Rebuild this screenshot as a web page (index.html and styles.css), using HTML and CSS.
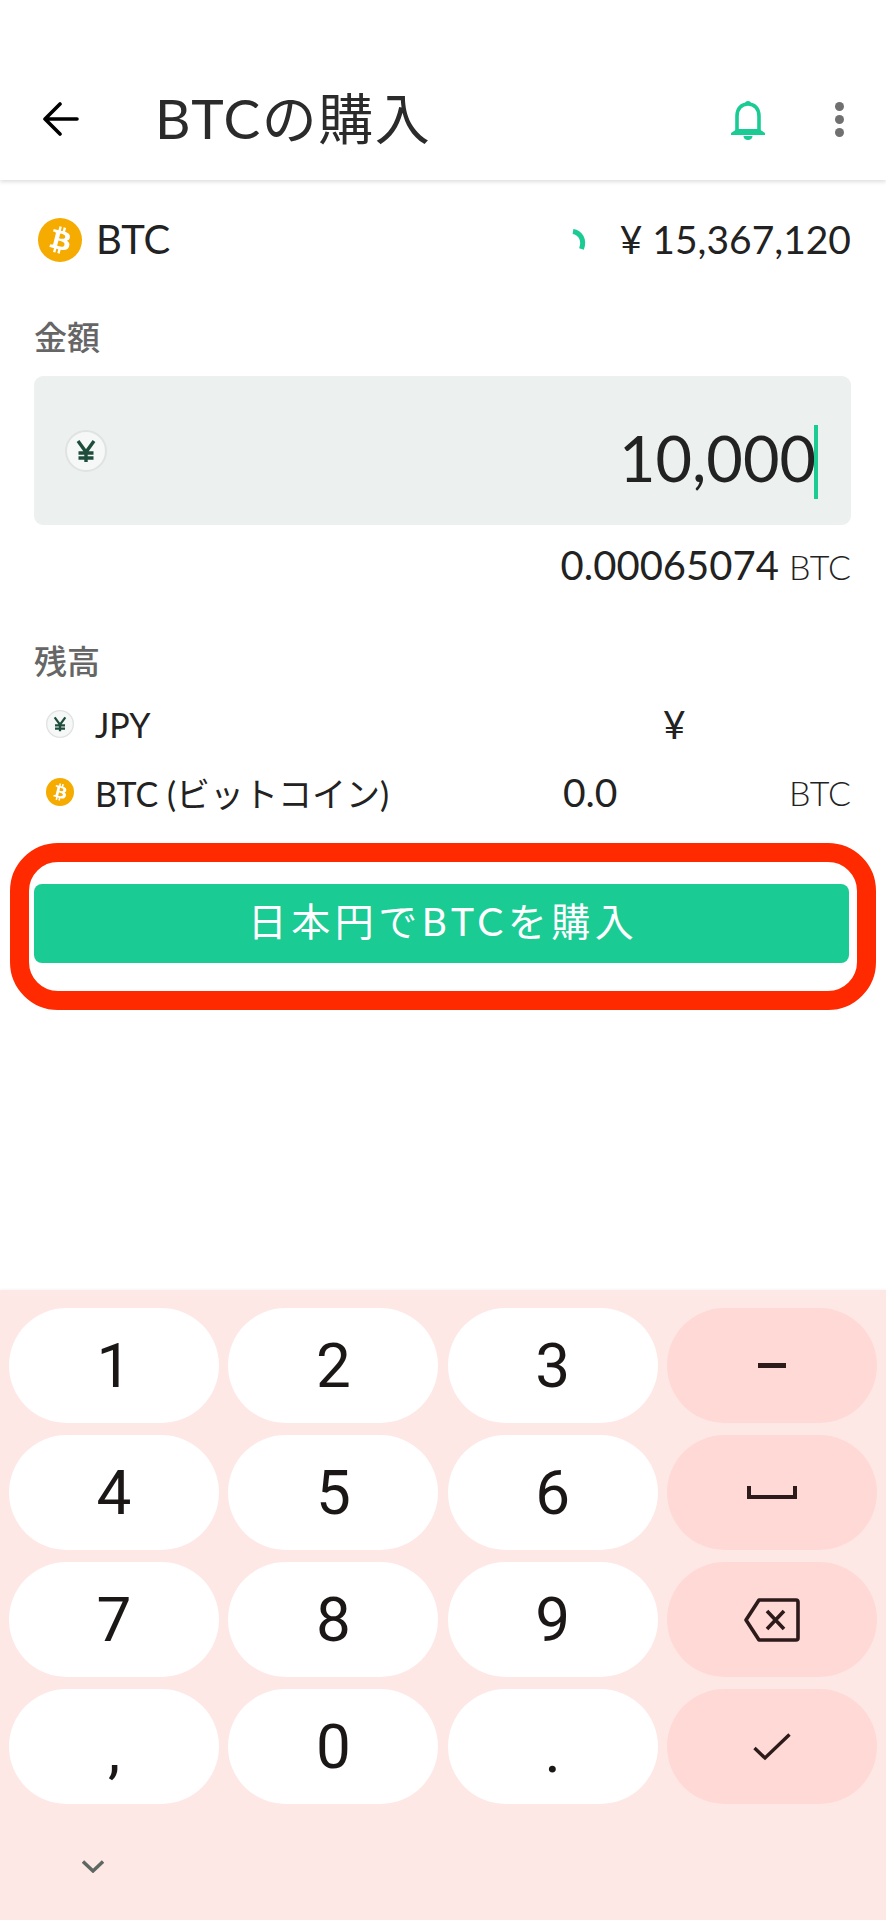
FILE: index.html
```html
<!DOCTYPE html>
<html lang="ja">
<head>
  <title>BTCの購入</title>
  <link rel="stylesheet" href="styles.css">
</head>
<body>
  <svg class="defs" width="0" height="0">
    <symbol id="btc" viewBox="0 0 32 32">
      <circle cx="16" cy="16" r="16" fill="#f5ab00"/>
      <path fill="#fff" d="M23.189 14.02c.314-2.096-1.283-3.223-3.465-3.975l.708-2.84-1.728-.43-.69 2.765c-.454-.114-.92-.22-1.385-.326l.695-2.783L15.596 6l-.708 2.839c-.376-.086-.746-.17-1.104-.26l.002-.009-2.384-.595-.46 1.846s1.283.294 1.256.312c.7.175.826.638.805 1.006l-.806 3.235c.048.012.11.03.18.057l-.183-.045-1.13 4.532c-.086.212-.303.531-.793.41.018.025-1.256-.313-1.256-.313l-.858 1.978 2.25.561c.418.105.828.215 1.231.318l-.715 2.872 1.727.43.708-2.84c.472.127.93.245 1.378.357l-.706 2.828 1.728.43.715-2.866c2.948.558 5.164.333 6.097-2.333.752-2.146-.037-3.385-1.588-4.192 1.13-.26 1.98-1.003 2.207-2.538zm-3.95 5.538c-.533 2.147-4.148.986-5.32.695l.95-3.805c1.172.293 4.929.872 4.37 3.11zm.535-5.569c-.487 1.953-3.495.96-4.47.717l.86-3.45c.975.243 4.118.696 3.61 2.733z"/>
    </symbol>
    <symbol id="yen" viewBox="0 0 42 42">
      <circle cx="21" cy="21" r="20" fill="#f6f8f7" stroke="#dfe3e1" stroke-width="2"/>
      <path fill="none" stroke="#1f4d3c" stroke-width="3.4" d="M13 11l8 11 8-11M21 22v10M13.500 23h15M13.500 28h15"/>
    </symbol>
  </svg>

  <header class="topbar">
    <svg class="back" width="36" height="34" viewBox="0 0 36 34">
      <path fill="none" stroke="#000" stroke-width="3.6" stroke-linecap="round" stroke-linejoin="round" d="M34 17H3M17 2L2 17l15 15"/>
    </svg>
    <h1 class="title">BTCの購入</h1>
    <svg class="bell" width="36" height="42" viewBox="0 0 36 42">
      <path fill="none" stroke="#1acb94" stroke-width="3.6" d="M7 33V18C7 10.500 11.500 6 18 6s11 4.500 11 12v15"/>
      <path fill="#1acb94" d="M15 6a3 3 0 0 1 6 0zM1 35l6-4h22l6 4v2H1zM13.500 38h9c0 2.500-2 4-4.500 4s-4.500-1.500-4.500-4z"/>
    </svg>
    <div class="more"><i></i><i></i><i></i></div>
  </header>

  <main class="content">
    <div class="pair">
      <svg class="coin-lg"><use href="#btc"/></svg>
      <span class="pair-name">BTC</span>
      <svg class="spinner" width="16" height="22" viewBox="0 0 16 22">
        <path fill="none" stroke="#1acb94" stroke-width="5" d="M1 2.500c7 1 12 8 8.500 17.500"/>
      </svg>
      <span class="pair-price">¥ 15,367,120</span>
    </div>

    <div class="label amount-label">金額</div>
    <div class="amount-box">
      <svg class="yen-lg"><use href="#yen"/></svg>
      <span class="amount-value">10,000</span>
      <span class="caret"></span>
    </div>
    <div class="converted">0.00065074 <span class="unit">BTC</span></div>

    <div class="label balance-label">残高</div>
    <div class="balance">
      <div class="balance-name"><svg class="coin-sm"><use href="#yen"/></svg>JPY</div>
      <div></div>
      <div class="balance-num">¥</div>
      <div></div>
      <div class="balance-name"><svg class="coin-sm"><use href="#btc"/></svg>BTC (ビットコイン)</div>
      <div class="balance-num">0.0</div>
      <div></div>
      <div class="unit">BTC</div>
    </div>

    <div class="highlight">
      <button class="buy">日本円でBTCを購入</button>
    </div>
  </main>

  <section class="keyboard">
    <div class="keys">
      <div class="key">1</div>
      <div class="key">2</div>
      <div class="key">3</div>
      <div class="key fn"><svg width="28" height="5"><rect width="28" height="5" fill="#2d1a1a"/></svg></div>
      <div class="key">4</div>
      <div class="key">5</div>
      <div class="key">6</div>
      <div class="key fn">
        <svg width="50" height="14" viewBox="0 0 50 14"><path fill="none" stroke="#2d1a1a" stroke-width="4" d="M2 0v11h46V0"/></svg>
      </div>
      <div class="key">7</div>
      <div class="key">8</div>
      <div class="key">9</div>
      <div class="key fn">
        <svg width="56" height="44" viewBox="0 0 56 44"><path fill="none" stroke="#2d1a1a" stroke-width="3.600" stroke-linejoin="round" d="M2 22L15 2h37a2 2 0 0 1 2 2v36a2 2 0 0 1-2 2H15zM23 13l17 18M40 13L23 31"/></svg>
      </div>
      <div class="key comma">,</div>
      <div class="key">0</div>
      <div class="key dot">.</div>
      <div class="key fn">
        <svg width="38" height="28" viewBox="0 0 38 28"><path fill="none" stroke="#2d1a1a" stroke-width="3.400" d="M1.500 15l10.500 10L36.500 1.500"/></svg>
      </div>
    </div>
    <svg class="collapse" width="22" height="13" viewBox="0 0 22 13"><path fill="none" stroke="#5f6763" stroke-width="3.400" d="M1 1.500l10 9.500 10-9.500"/></svg>
  </section>
</body>
</html>
```

FILE: styles.css
```css
* {
  box-sizing: border-box;
}
html {
  overflow: hidden;
}
body {
  margin: 0;
  width: 886px;
  height: 1920px;
  display: flex;
  flex-direction: column;
  overflow: hidden;
  background: #fff;
  color: #222;
  font-family: Lato, "Noto Sans CJK JP", sans-serif;
}
.defs {
  position: absolute;
}

.topbar {
  height: 180px;
  flex: none;
  display: flex;
  align-items: center;
  padding: 58px 0 0 43px;
  box-shadow: 0 2px 4px rgba(0, 0, 0, 0.13);
}
.title {
  margin: 0 0 2px 76px;
  flex: 1;
  font-size: 55px;
  font-weight: 400;
  letter-spacing: 1.5px;
  line-height: 66px;
  color: #2b2b2b;
}
.bell {
  margin: 0 69px 0 0;
}
.more {
  width: 9px;
  margin-right: 42px;
  display: flex;
  flex-direction: column;
  gap: 4px;
}
.more i {
  width: 9px;
  height: 9px;
  border-radius: 50%;
  background: #707070;
}

.content {
  padding: 0 35px 0 34px;
}
.pair {
  display: flex;
  align-items: center;
  height: 44px;
  margin-top: 38px;
  padding-left: 4px;
}
.coin-lg {
  width: 44px;
  height: 44px;
  flex: none;
}
.pair-name {
  margin-left: 14px;
  padding-bottom: 3px;
  flex: 1;
  font-size: 40px;
}
.spinner {
  margin-right: 32px;
}
.pair-price {
  padding-bottom: 3px;
  font-size: 39px;
  line-height: 44px;
}

.label {
  font-size: 33px;
  line-height: 40px;
  font-weight: 500;
  color: #666;
}
.amount-label {
  margin-top: 55px;
}
.amount-box {
  height: 149px;
  margin-top: 19px;
  padding: 0 33px 0 31px;
  display: flex;
  align-items: center;
  border-radius: 9px;
  background: #ecf0ef;
}
.yen-lg {
  width: 42px;
  height: 42px;
}
.amount-value {
  margin-left: auto;
  padding-top: 14px;
  font-size: 63px;
  line-height: 80px;
}
.caret {
  width: 4px;
  height: 74px;
  margin: 22px 0 0 -2px;
  background: #1acb94;
}
.converted {
  margin-top: 16px;
  text-align: right;
  font-size: 40px;
  line-height: 48px;
}
.unit {
  font-size: 34px;
  font-weight: 300;
}
.balance-label {
  margin-top: 50px;
}
.balance {
  margin-top: 9px;
  display: grid;
  grid-template-columns: 529px 100px 1fr auto;
  grid-auto-rows: 68px;
  align-items: center;
}
.balance-name {
  display: flex;
  align-items: center;
  font-size: 34px;
}
.coin-sm {
  width: 28px;
  height: 28px;
  margin: 0 21px 0 12px;
}
.balance-num {
  font-size: 39px;
}

.highlight {
  margin: 17px -25px 0 -24px;
  padding: 22px 8px 28px 5px;
  height: 167px;
  border: 19px solid #ff2a00;
  border-radius: 48px;
}
.buy {
  display: block;
  width: 100%;
  height: 79px;
  padding: 0 0 10px 3px;
  border: none;
  border-radius: 8px;
  background: #1acb94;
  color: #fff;
  font-family: inherit;
  font-size: 39px;
  font-weight: 400;
  letter-spacing: 4.5px;
}

.keyboard {
  margin-top: auto;
  height: 630px;
  padding: 18px 9px 0;
  background: #fee8e6;
  box-shadow: 0 -1px 2px rgba(0, 0, 0, 0.04);
}
.keys {
  display: grid;
  grid-template-columns: repeat(4, 210px);
  grid-auto-rows: 115px;
  gap: 12px 9.33px;
}
.key {
  display: flex;
  align-items: center;
  justify-content: center;
  border-radius: 58px;
  background: #fff;
  color: #1c1717;
  font-family: Roboto, sans-serif;
  font-size: 62px;
}
.key.fn {
  background: #ffd9d6;
}
.key.comma, .key.dot {
  padding-top: 8px;
}
.collapse {
  display: block;
  margin: 56px 0 0 73px;
}
```
